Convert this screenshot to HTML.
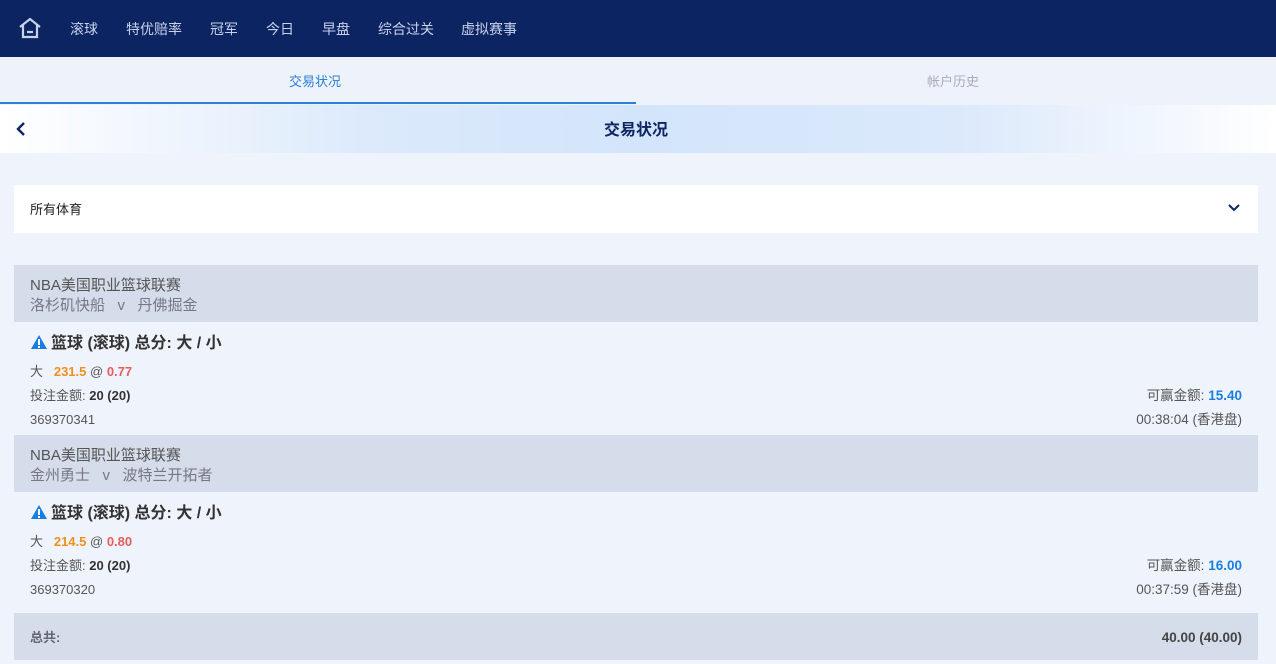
<!DOCTYPE html>
<html><head><meta charset="utf-8"><style>
*{margin:0;padding:0;box-sizing:border-box}
body{width:1276px;height:664px;overflow:hidden;background:#eff4fc;font-family:"Liberation Sans","Noto Sans CJK SC",sans-serif;color:#333;position:relative}
.top{position:absolute;left:0;top:0;width:1276px;height:57px;background:#0d2463;box-shadow:0 2px 4px rgba(0,0,0,.3)}
.top span{position:absolute;top:20px;font-size:14px;line-height:18px;color:#c8d2ea}
.tabs{position:absolute;top:57px;left:0;width:1276px;height:48px;background:#eef3fb}
.tabs span{position:absolute;top:17px;font-size:13px;line-height:16px}
.ul{position:absolute;left:0;top:102px;width:636px;height:2px;background:#2a7fd6}
.title{position:absolute;top:105px;left:0;width:1276px;height:48px;background:linear-gradient(90deg,#fff 0%,#dbe9fb 30%,#d3e5fb 50%,#dbe9fb 75%,#fff 100%)}
.abs{position:absolute}
.dd{position:absolute;left:14px;top:185px;width:1244px;height:48px;background:#fff}
.gh{position:absolute;left:14px;width:1244px;height:57px;background:#d5dcea}
.t{position:absolute;font-size:13px;line-height:16px;color:#555;white-space:nowrap}
.h{font-size:15px;line-height:20px}
.b{font-size:16px;line-height:20px;font-weight:bold;color:#333}
</style></head><body>
<div class="top">
<svg class="abs" style="left:18px;top:16px" width="24" height="24" viewBox="0 0 24 24"><path d="M2 11 L12 3 L22 11 M5 9 V21 H19 V9 M9 16 H15" fill="none" stroke="#c8d2ea" stroke-width="2.2"/></svg>
<span style="left:70px">滚球</span><span style="left:126px">特优赔率</span><span style="left:210px">冠军</span><span style="left:266px">今日</span><span style="left:322px">早盘</span><span style="left:378px">综合过关</span><span style="left:461px">虚拟赛事</span>
</div>
<div class="tabs"><span style="left:289px;color:#2a7fd6">交易状况</span><span style="left:927px;color:#aab">帐户历史</span></div>
<div class="ul"></div>
<div class="title">
<svg class="abs" style="left:15px;top:16px" width="12" height="16" viewBox="0 0 12 16"><path d="M9 2 L3 8 L9 14" fill="none" stroke="#0d2463" stroke-width="2.4"/></svg>
<span class="abs" style="left:604px;top:16px;font-size:16px;line-height:20px;font-weight:bold;color:#0d2463">交易状况</span></div>
<div class="dd"><span class="abs" style="left:16px;top:17px;font-size:13px;line-height:16px;color:#222">所有体育</span>
<svg class="abs" style="left:1213px;top:18px" width="14" height="10" viewBox="0 0 14 10"><path d="M2 2 L7 7 L12 2" fill="none" stroke="#0d2463" stroke-width="2"/></svg></div>

<div class="gh" style="top:265px"><div class="t h" style="left:16px;top:11px">NBA美国职业篮球联赛</div><div class="t h" style="left:16px;top:31px;color:#778">洛杉矶快船 &nbsp; v &nbsp; 丹佛掘金</div></div>
<svg class="abs" style="left:30px;top:334px" width="18" height="16" viewBox="0 0 18 16"><path d="M9 1 L17 15 H1 Z" fill="#1a7ee0"/><rect x="8" y="5" width="2" height="6" fill="#fff"/><rect x="8" y="12" width="2" height="2" fill="#fff"/></svg>
<div class="t b" style="left:51px;top:334px">篮球 (滚球) 总分: 大 / 小</div>
<div class="t" style="left:30px;top:364px">大 &nbsp; <b style="color:#f0901c">231.5</b> @ <b style="color:#e85c5c">0.77</b></div>
<div class="t" style="left:30px;top:388px">投注金额: <b style="color:#333">20 (20)</b></div>
<div class="t" style="left:30px;top:412px">369370341</div>
<div class="t" style="right:34px;top:388px;font-size:13.5px">可赢金额: <b style="color:#1a7ee0">15.40</b></div>
<div class="t" style="right:34px;top:412px;font-size:13.5px">00:38:04 (香港盘)</div>

<div class="gh" style="top:435px"><div class="t h" style="left:16px;top:11px">NBA美国职业篮球联赛</div><div class="t h" style="left:16px;top:31px;color:#778">金州勇士 &nbsp; v &nbsp; 波特兰开拓者</div></div>
<svg class="abs" style="left:30px;top:504px" width="18" height="16" viewBox="0 0 18 16"><path d="M9 1 L17 15 H1 Z" fill="#1a7ee0"/><rect x="8" y="5" width="2" height="6" fill="#fff"/><rect x="8" y="12" width="2" height="2" fill="#fff"/></svg>
<div class="t b" style="left:51px;top:504px">篮球 (滚球) 总分: 大 / 小</div>
<div class="t" style="left:30px;top:534px">大 &nbsp; <b style="color:#f0901c">214.5</b> @ <b style="color:#e85c5c">0.80</b></div>
<div class="t" style="left:30px;top:558px">投注金额: <b style="color:#333">20 (20)</b></div>
<div class="t" style="left:30px;top:582px">369370320</div>
<div class="t" style="right:34px;top:558px;font-size:13.5px">可赢金额: <b style="color:#1a7ee0">16.00</b></div>
<div class="t" style="right:34px;top:582px;font-size:13.5px">00:37:59 (香港盘)</div>

<div class="gh" style="top:613px;height:47px"><div class="t" style="left:16px;top:17px;font-weight:bold;color:#667">总共:</div><div class="t" style="right:16px;top:17px;font-weight:bold;color:#444;font-size:13.5px">40.00 (40.00)</div></div>
</body></html>
